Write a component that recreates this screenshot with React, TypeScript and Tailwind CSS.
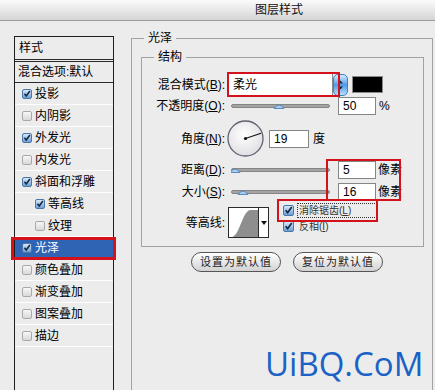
import React from 'react';

const layers = [
  { name: '投影', checked: true },
  { name: '内阴影' },
  { name: '外发光', checked: true },
  { name: '内发光' },
  { name: '斜面和浮雕', checked: true },
  { name: '等高线', checked: true, indent: true },
  { name: '纹理', indent: true },
  { name: '光泽', checked: true, active: true },
  { name: '颜色叠加' },
  { name: '渐变叠加' },
  { name: '图案叠加' },
  { name: '描边' },
];

function Check({ checked, size = 10 }: { checked?: boolean; size?: number }) {
  if (!checked) {
    return (
      <span
        className="block shrink-0 rounded-[2px] border border-[#a9a9a9] bg-linear-to-b from-[#f7f7f7] to-[#d9d9d9]"
        style={{ width: size, height: size }}
      />
    );
  }
  return (
    <span
      className="relative block shrink-0 rounded-[2px] border border-[#4b77a6] bg-linear-to-b from-[#d7e8f8] to-[#6c9fd6]"
      style={{ width: size, height: size }}
    >
      <svg viewBox="0 0 10 10" className="absolute inset-0 h-full w-full">
        <path d="M1.8 4.8 L4 7.4 L8.6 1.2" fill="none" stroke="#152544" strokeWidth="1.9" />
      </svg>
    </span>
  );
}

function Label({ children }: { children: React.ReactNode }) {
  return <span className="w-[83px] shrink-0 text-right">{children}</span>;
}

function Slider({ at }: { at: number }) {
  return (
    <svg width="99" height="10" viewBox="0 0 99 10" className="ml-[6px] shrink-0">
      <rect x="0.5" y="3.5" width="98" height="3" rx="1.5" fill="#a4a4a4" stroke="#737373" strokeWidth="0.8" />
      <path d={`M${at - 5} 7.5 Q${at} 0.5 ${at + 5} 7.5 Z`} fill="#a9cdf2" stroke="#4d82bb" strokeWidth="0.9" />
    </svg>
  );
}

function Field({ value, wide }: { value: string; wide?: boolean }) {
  return (
    <span
      className={`flex h-[18px] shrink-0 items-center border border-[#858585] bg-white pl-[4px] text-[12px] leading-none ${
        wide ? 'w-[40px]' : 'w-[38px]'
      }`}
    >
      {value}
    </span>
  );
}

export default function App() {
  return (
    <div className="relative h-[390px] w-[435px] overflow-hidden bg-[#ececec] font-['Liberation_Sans','Noto_Sans_CJK_SC',sans-serif] text-[12px] text-black">
      {/* title bar */}
      <div className="h-[21px] border-b border-[#9c9c9c] bg-linear-to-b from-[#fbfbfb] to-[#d5d5d5] pl-[255px] leading-[20px] text-[#111]">
        图层样式
      </div>

      <div className="flex">
        {/* styles list */}
        <div className="ml-[14px] mt-[15px] h-[360px] w-[100px] shrink-0 border border-[#1e1e1e]">
          <div className="h-[25px] border-b-[3px] border-double border-[#2a2a2a] pl-[4px] leading-[22px]">样式</div>
          <div className="h-[21px] border-b border-[#2a2a2a] pl-[3px] leading-[20px]">混合选项:默认</div>
          {layers.map((l) => (
            <div
              key={l.name}
              className={`flex h-[22px] items-center border-b border-white ${l.indent ? 'pl-[20px]' : 'pl-[7px]'} ${
                l.active ? 'bg-[#2f63b4] text-white' : ''
              }`}
            >
              <Check checked={l.checked} />
              <span className="ml-[3px]">{l.name}</span>
            </div>
          ))}
        </div>

        {/* right panel */}
        <fieldset className="ml-[17px] mt-[9px] h-[380px] w-[302px] shrink-0 border border-[#a2a2a2]">
          <legend className="ml-[12px] px-[4px] leading-[16px]">光泽</legend>

          <fieldset className="ml-[9px] mt-[3px] h-[198px] w-[283px] border border-[#a2a2a2]">
            <legend className="ml-[12px] px-[4px] leading-[16px]">结构</legend>

            <div className="mt-[8px] flex h-[23px] items-center">
              <Label>
                混合模式(<u>B</u>):
              </Label>
              <span className="ml-[2px] flex h-[23px] w-[106px] items-center border border-[#8d8d8d] bg-white pl-[5px]">柔光</span>
              <span className="flex h-[22px] w-[15px] flex-col items-center justify-center rounded-[5px] border border-[#3f7fc4] bg-linear-to-b from-[#d8ecff] via-[#4c9ae6] to-[#b9defd]">
                <svg width="7" height="12" viewBox="0 0 7 12">
                  <path d="M1 4.5 L3.5 1.5 L6 4.5 Z M1 7.5 L3.5 10.5 L6 7.5 Z" fill="#1c2b44" />
                </svg>
              </span>
              <span className="ml-[4px] h-[17px] w-[31px] border border-[#8a8a8a] bg-black" />
            </div>

            <div className="flex h-[20px] items-center">
              <Label>
                不透明度(<u>O</u>):
              </Label>
              <Slider at={48} />
              <span className="ml-[8px]">
                <Field value="50" />
              </span>
              <span className="ml-[3px]">%</span>
            </div>

            <div className="mt-[4px] flex h-[37px] items-center">
              <Label>
                角度(<u>N</u>):
              </Label>
              <svg width="37" height="37" viewBox="0 0 37 37" className="ml-[2px] shrink-0">
                <defs>
                  <radialGradient id="dial" cx="45%" cy="40%" r="60%">
                    <stop offset="0%" stopColor="#ffffff" />
                    <stop offset="100%" stopColor="#e0e0e4" />
                  </radialGradient>
                </defs>
                <circle cx="18.5" cy="18.5" r="17.5" fill="url(#dial)" stroke="#5f6070" strokeWidth="1.3" />
                <line x1="18.5" y1="18.5" x2="34" y2="13.2" stroke="#111" strokeWidth="1.1" />
                <circle cx="18.5" cy="18.5" r="1.6" fill="#111" />
              </svg>
              <span className="ml-[5px]">
                <Field value="19" wide />
              </span>
              <span className="ml-[4px]">度</span>
            </div>

            <div className="mt-[4px] flex h-[18px] items-center">
              <Label>
                距离(<u>D</u>):
              </Label>
              <Slider at={4} />
              <span className="ml-[8px]">
                <Field value="5" />
              </span>
              <span className="ml-[2px]">像素</span>
            </div>

            <div className="mt-[4px] flex h-[18px] items-center">
              <Label>
                大小(<u>S</u>):
              </Label>
              <Slider at={12} />
              <span className="ml-[8px]">
                <Field value="16" />
              </span>
              <span className="ml-[2px]">像素</span>
            </div>

            <div className="mt-[6px] flex h-[31px] items-center">
              <Label>等高线:</Label>
              <span className="ml-[3px] flex h-[31px] w-[41px] shrink-0 border border-[#2b2b2b] bg-white">
                <svg width="29" height="29" viewBox="0 0 29 29" className="shrink-0">
                  <path d="M3 29 C11 27 13 4 21 2 L29 2 L29 29 Z" fill="#8e8e8e" />
                </svg>
                <span className="flex flex-1 items-center justify-center border-l border-[#2b2b2b]">
                  <svg width="6" height="4" viewBox="0 0 6 4">
                    <path d="M0 0 L6 0 L3 4 Z" fill="#111" />
                  </svg>
                </span>
              </span>
              <div className="ml-[14px] mt-[-4px] flex flex-col self-start text-[10px]">
                <div className="flex h-[15px] items-center">
                  <Check checked size={11} />
                  <span className="ml-[3px] h-[15px] w-[80px] border border-dotted border-[#333] pl-[1px] leading-[13px] text-[#333]">
                    消除锯齿(<u>L</u>)
                  </span>
                </div>
                <div className="mt-[1px] flex h-[15px] items-center">
                  <Check checked size={11} />
                  <span className="ml-[4px] pl-[1px] text-[#333]">
                    反相(<u>I</u>)
                  </span>
                </div>
              </div>
            </div>
          </fieldset>

          <div className="ml-[59px] mt-[5px] flex gap-[12px]">
            <button className="h-[20px] w-[90px] rounded-full border border-[#555] bg-linear-to-b from-[#ffffff] to-[#d2d2d2] text-[11px] tracking-[1px] text-[#222]">
              设置为默认值
            </button>
            <button className="h-[20px] w-[90px] rounded-full border border-[#555] bg-linear-to-b from-[#ffffff] to-[#d2d2d2] text-[11px] tracking-[1px] text-[#222]">
              复位为默认值
            </button>
          </div>
        </fieldset>
      </div>

      {/* red annotation boxes */}
      <div className="absolute left-[11px] top-[237px] h-[23px] w-[105px] border-[3px] border-[#d3121c]" />
      <div className="absolute left-[227px] top-[72px] h-[25px] w-[113px] border-2 border-[#d3121c]" />
      <div className="absolute left-[326px] top-[159px] h-[42px] w-[75px] border-2 border-[#d3121c]" />
      <div className="absolute left-[277px] top-[199px] h-[23px] w-[101px] border-2 border-[#d3121c]" />

      {/* watermark */}
      <div className="absolute left-[265px] top-[347px] font-['Open_Sans',sans-serif] text-[33px] leading-none text-[#1a62c6]">
        UiBQ.CoM
      </div>
    </div>
  );
}
